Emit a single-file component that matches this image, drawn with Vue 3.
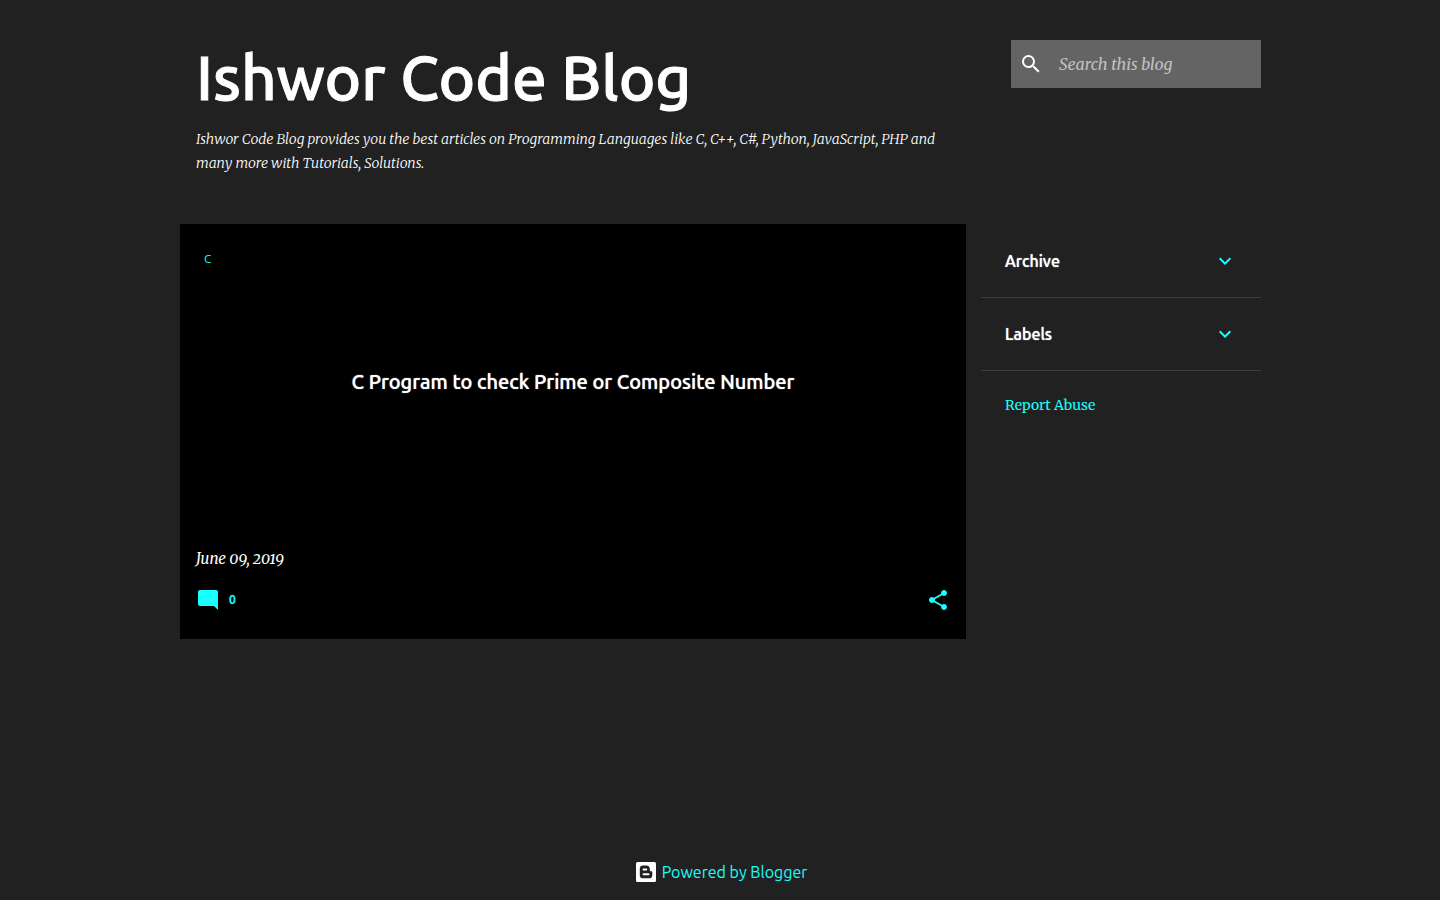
<script setup>
import { ref } from 'vue'

const query = ref('')
const sections = ['Archive', 'Labels']
</script>

<template>
  <div class="page">
    <div class="container">
      <header class="header">
        <div class="intro">
          <h1 class="title">Ishwor Code Blog</h1>
          <p class="description">
            Ishwor Code Blog provides you the best articles on Programming Languages like C, C++, C#, Python, JavaScript, PHP and many more with Tutorials, Solutions.
          </p>
        </div>
        <form class="search" role="search" @submit.prevent>
          <button class="icon-button search-button" type="submit" aria-label="Search">
            <svg class="icon" viewBox="0 0 24 24"><path d="M15.5 14h-.79l-.28-.27A6.471 6.471 0 0 0 16 9.5 6.5 6.5 0 1 0 9.5 16c1.61 0 3.09-.59 4.23-1.57l.27.28v.79l5 4.99L20.49 19l-4.99-5zm-6 0C7.01 14 5 11.99 5 9.5S7.01 5 9.5 5 14 7.01 14 9.5 11.99 14 9.5 14z" /></svg>
          </button>
          <input v-model="query" class="search-input" type="text" placeholder="Search this blog" aria-label="Search this blog" />
        </form>
      </header>

      <div class="columns">
        <main class="main">
          <article class="post">
            <a class="label" href="#">C</a>
            <h2 class="post-title"><a href="#">C Program to check Prime or Composite Number</a></h2>
            <div class="post-footer">
              <time class="date" datetime="2019-06-09">June 09, 2019</time>
              <div class="actions">
                <a class="comments" href="#" aria-label="0 comments">
                  <svg class="icon" viewBox="0 0 24 24"><path d="M21.99 4c0-1.1-.89-2-1.99-2H4c-1.1 0-2 .9-2 2v12c0 1.1.9 2 2 2h14l4 4-.01-18z" /></svg>
                  <span class="count">0</span>
                </a>
                <button class="icon-button" type="button" aria-label="Share">
                  <svg class="icon" viewBox="0 0 24 24"><path d="M18 16.08c-.76 0-1.44.3-1.96.77L8.91 12.7c.05-.23.09-.46.09-.7s-.04-.47-.09-.7l7.05-4.11c.54.5 1.25.81 2.04.81 1.66 0 3-1.34 3-3s-1.34-3-3-3-3 1.34-3 3c0 .24.04.47.09.7L8.04 9.81C7.5 9.31 6.79 9 6 9c-1.66 0-3 1.34-3 3s1.34 3 3 3c.79 0 1.5-.31 2.04-.81l7.12 4.16c-.05.21-.08.43-.08.65 0 1.61 1.31 2.92 2.92 2.92 1.61 0 2.92-1.31 2.92-2.92s-1.31-2.92-2.92-2.92z" /></svg>
                </button>
              </div>
            </div>
          </article>
        </main>

        <aside class="sidebar">
          <button v-for="name in sections" :key="name" class="section" type="button">
            <span>{{ name }}</span>
            <svg class="icon" viewBox="0 0 24 24"><path d="M7.41 8.59L12 13.17l4.59-4.58L18 10l-6 6-6-6z" /></svg>
          </button>
          <a class="report" href="#">Report Abuse</a>
        </aside>
      </div>
    </div>

    <footer class="footer">
      <a class="powered" href="#">
        <svg class="icon blogger" viewBox="0 0 24 24">
          <rect x="2" y="2" width="20" height="20" rx="1.500" />
          <path class="blogger-mark" fill-rule="evenodd" d="M9.200 5.500A3.400 3.400 0 0 0 5.800 8.900v6A3.400 3.400 0 0 0 9.200 18.300h5.700a3.400 3.400 0 0 0 3.400-3.400v-2.700a1 1 0 0 0-1-1h-.6c-.5 0-.9-.4-.9-.9V9.100A3.600 3.600 0 0 0 12.200 5.500zm.3 3h2.800a.95.95 0 0 1 0 1.900H9.500a.95.95 0 0 1 0-1.900zm0 4.800h5a.95.95 0 0 1 0 1.900h-5a.95.95 0 0 1 0-1.900z" />
        </svg>
        <span>Powered by Blogger</span>
      </a>
    </footer>
  </div>
</template>

<style>
body {
  margin: 0;
  background: #212121;
}
</style>

<style scoped>
.page {
  --accent: #18ffff;
  --sans: Ubuntu, "Noto Sans", sans-serif;
  --serif: Merriweather, "Liberation Serif", serif;
  display: flex;
  flex-direction: column;
  min-height: 100vh;
  background: #212121;
  color: #fff;
  font-family: var(--sans);
}

.page * {
  box-sizing: border-box;
}

a {
  color: var(--accent);
  text-decoration: none;
}

button {
  padding: 0;
  border: 0;
  background: none;
  color: inherit;
  font: inherit;
  cursor: pointer;
}

.icon {
  display: block;
  flex: none;
  width: 24px;
  height: 24px;
  fill: var(--accent);
}

.container {
  flex: 1;
  box-sizing: border-box;
  width: 100%;
  max-width: 1082px;
  margin: 0 auto;
  padding-left: 1px;
}

.header {
  display: flex;
  align-items: flex-start;
  justify-content: space-between;
  padding: 40px 0 48px;
}

.intro {
  max-width: 786px;
  padding-left: 16px;
}

.title {
  margin: 0;
  font-size: 62px;
  font-weight: 500;
  line-height: 74px;
  -webkit-text-stroke: 1px currentColor;
}

.description {
  margin: 13px 0 1px;
  font-family: var(--serif);
  font-size: 14px;
  font-style: italic;
  font-weight: 300;
  line-height: 24px;
}

.search {
  display: flex;
  align-items: center;
  flex: none;
  width: 250px;
  height: 48px;
  background: #646464;
}

.search-button {
  padding: 0 8px;
}

.search-button .icon {
  fill: #fff;
}

.search-input {
  flex: 1;
  min-width: 0;
  height: 48px;
  padding: 0 8px;
  border: 0;
  background: none;
  color: #fff;
  font-family: var(--serif);
  font-size: 16px;
  font-style: italic;
}

.search-input::placeholder {
  color: #c1c1c1;
  opacity: 1;
}

.columns {
  display: flex;
  align-items: flex-start;
  gap: 15px;
}

.main {
  flex: 1;
}

.post {
  display: flex;
  flex-direction: column;
  min-height: 415px;
  padding: 24px 16px 27px;
  background: #000;
}

.label {
  align-self: flex-start;
  padding: 0 8px;
  font-size: 12px;
  line-height: 22px;
}

.post-title {
  margin: 97px 0 0;
  font-size: 20px;
  font-weight: 500;
  line-height: 30px;
  text-align: center;
  text-shadow: 0 0 1px currentColor;
}

.post-title a {
  color: #fff;
}

.post-footer {
  margin-top: auto;
}

.date {
  display: block;
  font-family: var(--serif);
  font-size: 15px;
  font-style: italic;
  font-variant-numeric: oldstyle-nums;
  line-height: 24px;
}

.actions {
  display: flex;
  align-items: center;
  justify-content: space-between;
  margin-top: 17px;
}

.comments {
  display: flex;
  align-items: center;
  gap: 9px;
}

.count {
  font-size: 12px;
  font-weight: 500;
  line-height: 24px;
  text-shadow: 0 0 1px currentColor;
}

.sidebar {
  flex: none;
  width: 280px;
}

.section {
  display: flex;
  align-items: center;
  justify-content: space-between;
  width: 100%;
  height: 73px;
  padding: 0 24px;
  border-bottom: 1px solid #3d3d3d;
  font-size: 16px;
  font-weight: 500;
  text-shadow: 0 0 1px currentColor;
}

.section:first-child {
  height: 74px;
}

.report {
  display: block;
  padding: 22px 24px;
  font-family: var(--serif);
  font-size: 14px;
  line-height: 24px;
}

.footer {
  display: flex;
  justify-content: center;
  padding: 16px 16px 16px 17px;
}

.powered {
  display: flex;
  align-items: center;
  gap: 4px;
  font-size: 16px;
  line-height: 24px;
}

.blogger {
  fill: #fff;
}

.blogger-mark {
  fill: #212121;
}
</style>
